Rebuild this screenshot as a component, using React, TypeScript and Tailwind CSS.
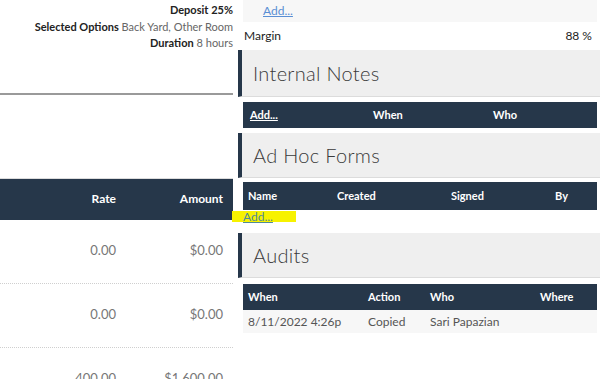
import React from 'react';

const navy = 'bg-[#26374a]';

const SectionHeader: React.FC<{ title: string; tall?: boolean }> = ({ title, tall }) => (
  <div className={`shrink-0 ${tall ? 'h-[47px]' : 'h-[45px]'} bg-[#efefef] border-l-4 border-[#26374a] border-b border-b-[#dcdcdc] flex items-center pl-[11px]`}>
    <span className="text-[20px] font-light text-[#3a3a3a] tracking-[0.3px]">{title}</span>
  </div>
);

const rows = [
  { rate: '0.00', amount: '$0.00' },
  { rate: '0.00', amount: '$0.00' },
  { rate: '400.00', amount: '$1,600.00' },
];

export default function App() {
  return (
    <div className="w-[600px] h-[379px] overflow-hidden bg-white flex gap-[5px] text-[#333]" style={{ fontFamily: 'Lato, "Noto Sans", sans-serif' }}>
      {/* left: quote summary + line items */}
      <div className="w-[233px] shrink-0 flex flex-col">
        <div className="shrink-0 pt-[2px] text-right text-[11px] leading-[16.5px]">
          <p><span className="font-bold text-[#222]">Deposit</span> <span className="font-bold text-[#222]">25%</span></p>
          <p><span className="font-bold text-[#222]">Selected Options</span> <span className="text-[#666]">Back Yard, Other Room</span></p>
          <p><span className="font-bold text-[#222]">Duration</span> <span className="text-[#666]">8 hours</span></p>
        </div>
        <div className="shrink-0 mt-[41px] h-[2px] bg-[#9a9a9a]" />
        <div className="shrink-0 mt-[83px] border-t border-[#dcdcdc]">
          <div className={`h-[41px] ${navy} flex items-center justify-end text-white font-bold text-[12px]`}>
            <div className="w-[60px] text-right">Rate</div>
            <div className="w-[117px] text-right pr-[10px]">Amount</div>
          </div>
          {rows.map((r, i) => (
            <div key={i} className="h-[64px] flex items-center justify-end border-b border-dotted border-[#cfcfcf] text-[13px] text-[#777]">
              <div className="w-[60px] text-right">{r.rate}</div>
              <div className="w-[117px] text-right pr-[10px]">{r.amount}</div>
            </div>
          ))}
        </div>
      </div>

      {/* right: notes, forms, audits */}
      <div className="flex-1 flex flex-col text-[12px]">
        <div className="shrink-0 ml-[5px] mr-[3px] h-[22px] bg-[#f7f7f7] flex items-center pl-[20px]">
          <a className="text-[#5a8fd4] underline">Add...</a>
        </div>
        <div className="shrink-0 ml-[5px] mr-[3px] h-[28px] flex items-center justify-between pl-[1px] pr-[5px] text-[#222]">
          <span>Margin</span>
          <span>88 %</span>
        </div>

        <SectionHeader title="Internal Notes" tall />
        <div className={`shrink-0 mt-[5px] ml-[5px] mr-[3px] h-[26px] ${navy} grid grid-cols-[123px_120px_1fr] items-center pl-[7px] text-white font-bold text-[11px]`}>
          <a className="underline">Add...</a>
          <span>When</span>
          <span>Who</span>
        </div>

        <div className="shrink-0 mt-[5px]">
          <SectionHeader title="Ad Hoc Forms" />
        </div>
        <div className={`shrink-0 mt-[4px] ml-[5px] mr-[3px] h-[28px] ${navy} grid grid-cols-[89px_114px_104px_1fr] items-center pl-[5px] text-white font-bold text-[11px]`}>
          <span>Name</span>
          <span>Created</span>
          <span>Signed</span>
          <span>By</span>
        </div>
        <div className="shrink-0 relative h-[13px] ml-[5px] text-[12px] leading-[13px]">
          <div className="absolute left-[-11px] top-[1px] w-[64px] h-[11px] bg-[#f7f200]" />
          <a className="relative underline text-[#4f8a9a]">Add...</a>
        </div>

        <div className="shrink-0 mt-[10px]">
          <SectionHeader title="Audits" />
        </div>
        <div className={`shrink-0 mt-[6px] ml-[5px] mr-[3px] h-[26px] ${navy} grid grid-cols-[120px_62px_110px_1fr] items-center pl-[5px] text-white font-bold text-[11px]`}>
          <span>When</span>
          <span>Action</span>
          <span>Who</span>
          <span>Where</span>
        </div>
        <div className="shrink-0 ml-[5px] mr-[3px] h-[23px] bg-[#f7f7f7] grid grid-cols-[120px_62px_110px_1fr] items-center pl-[5px] text-[#555] text-[12px]">
          <span>8/11/2022 4:26p</span>
          <span>Copied</span>
          <span>Sari Papazian</span>
          <span></span>
        </div>
      </div>
    </div>
  );
}
